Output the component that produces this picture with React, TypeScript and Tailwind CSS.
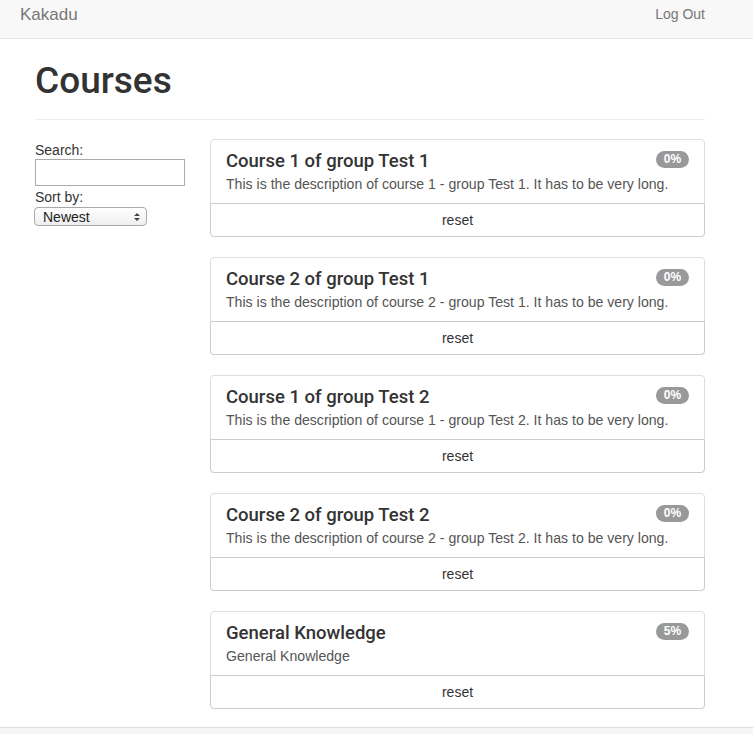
import React from 'react';

interface Course {
    id: number;
    title: string;
    description: string;
    progress: number;
}

const courses: Course[] = [
    { id: 1, title: 'Course 1 of group Test 1', description: 'This is the description of course 1 - group Test 1. It has to be very long.', progress: 0 },
    { id: 2, title: 'Course 2 of group Test 1', description: 'This is the description of course 2 - group Test 1. It has to be very long.', progress: 0 },
    { id: 3, title: 'Course 1 of group Test 2', description: 'This is the description of course 1 - group Test 2. It has to be very long.', progress: 0 },
    { id: 4, title: 'Course 2 of group Test 2', description: 'This is the description of course 2 - group Test 2. It has to be very long.', progress: 0 },
    { id: 5, title: 'General Knowledge', description: 'General Knowledge', progress: 5 },
];

const CourseCard: React.FC<{ course: Course }> = ({ course }) => (
    <div className="rounded border border-[#ddd] bg-white">
        <div className="relative px-[15px] pt-[10px] h-[63px]">
            <h3 className="font-['Roboto',sans-serif] text-[18.5px] leading-[22px] font-medium text-[#333]">{course.title}</h3>
            <p className="text-[14.1px] leading-[20px] text-[#555] mt-[2px]">{course.description}</p>
            <span className="absolute right-[15px] top-[11px] h-[17px] min-w-[33px] px-[7px] rounded-full bg-[#999] text-white text-[12px] font-bold leading-[17px] text-center">
                {course.progress}%
            </span>
        </div>
        <button className="block w-[calc(100%+2px)] -mx-px -mb-px h-[34px] border border-[#ccc] rounded-b bg-white text-[14px] text-[#333]">
            reset
        </button>
    </div>
);

const App: React.FC = () => {
    return (
        <div className="min-h-[734px] bg-white font-['Liberation_Sans','Helvetica_Neue',Arial,sans-serif] text-[#333] flex flex-col">
            {/* Навбар */}
            <nav className="h-[39px] bg-[#f8f8f8] border-b border-[#e7e7e7] flex items-center justify-between pl-[20px] pr-[48px]">
                <span className="text-[17px] text-[#777] -mt-[9px]">Kakadu</span>
                <span className="text-[14px] text-[#777] -mt-[10px]">Log Out</span>
            </nav>

            <div className="px-[35px] w-[740px]">
                <h1 className="font-['Roboto',sans-serif] text-[37px] leading-[40px] font-medium text-[#333] pt-[22px] pb-[18px] border-b border-[#eee]">
                    Courses
                </h1>

                <div className="grid grid-cols-[175px_1fr] mt-[19px]">
                    {/* Фильтры */}
                    <div className="text-[14px] leading-[18px] pt-[2px]">
                        <label className="block">Search:</label>
                        <input type="text" className="block w-[150px] h-[27px] border border-[#aaa] bg-white" />
                        <label className="block mt-[2px]">Sort by:</label>
                        <div className="relative w-[113px] h-[19px] -ml-px mt-px rounded-[4px] border border-[#aaa] bg-gradient-to-b from-white to-[#eee] flex items-center pl-[8px]">
                            <span className="text-[14px] text-[#222]">Newest</span>
                            <svg className="absolute right-[6px] top-[4px]" width="6" height="10" viewBox="0 0 6 10">
                                <path d="M0 4 L3 1 L6 4 Z M0 6 L3 9 L6 6 Z" fill="#444" />
                            </svg>
                        </div>
                    </div>

                    {/* Курсы */}
                    <div className="flex flex-col gap-[20px]">
                        {courses.map((course) => (
                            <CourseCard key={course.id} course={course} />
                        ))}
                    </div>
                </div>
            </div>

            <div className="flex-1 mt-[18px] bg-[#f5f5f5] border-t border-[#ddd]" />
        </div>
    );
};

export default App;
